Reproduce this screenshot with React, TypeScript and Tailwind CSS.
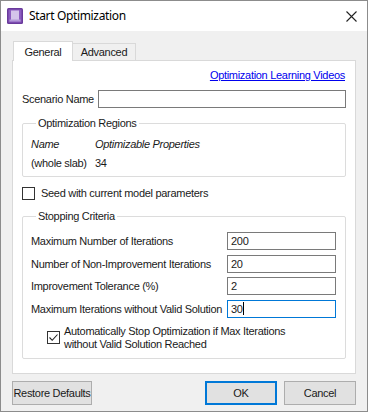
import React from "react";

const LABEL =
  "font-['Liberation_Sans',Arial,sans-serif] text-[11px] tracking-[-0.3px] leading-[14px] text-[#1a1a1a] whitespace-nowrap";

function Field({ value, focused, className }: { value: string; focused?: boolean; className: string }) {
  return (
    <div
      className={`h-[18px] bg-white border flex items-center pl-[3px] ${LABEL} ${
        focused ? "border-[#0078d7]" : "border-[#7a7a7a]"
      } ${className}`}
    >
      {value}
      {focused && <span className="w-px h-[13px] bg-black" />}
    </div>
  );
}

function Group({ title, className, children }: { title: string; className: string; children: React.ReactNode }) {
  return (
    <fieldset className={`border border-[#dcdcdc] rounded-[2px] ${className}`}>
      <legend className={`ml-[5px] px-[2px] ${LABEL}`}>{title}</legend>
      {children}
    </fieldset>
  );
}

const ROWS = [
  { label: "Maximum Number of Iterations", value: "200" },
  { label: "Number of Non-Improvement Iterations", value: "20" },
  { label: "Improvement Tolerance (%)", value: "2" },
  { label: "Maximum Iterations without Valid Solution", value: "30", focused: true },
];

export default function App() {
  return (
    <div className="w-[368px] h-[412px] border border-[#8c8c8c] bg-[#f0f0f0] flex flex-col overflow-hidden">
      {/* title bar */}
      <div className="h-[30px] bg-white flex items-center pl-[6px] pr-[10px] shrink-0">
        <svg width="16" height="16" viewBox="0 0 16 16">
          <rect x="0" y="0" width="16" height="16" rx="1.5" fill="#6a3a9c" />
          <rect x="1.5" y="1.5" width="13" height="13" fill="#8c5cc0" />
          <rect x="4" y="2.5" width="8" height="9.5" fill="#d4c4ea" />
          <rect x="2.5" y="11.5" width="11" height="2" fill="#b49ad8" />
        </svg>
        <span className="ml-[6px] font-['Noto_Sans',sans-serif] text-[12px] tracking-[-0.35px] text-black">
          Start Optimization
        </span>
        <svg className="ml-auto" width="11" height="11" viewBox="0 0 11 11">
          <path d="M0.5 0.5 L10.5 10.5 M10.5 0.5 L0.5 10.5" stroke="#222" strokeWidth="1.1" />
        </svg>
      </div>

      <div className="flex-1 flex flex-col px-[11px] pt-[10px]">
        {/* tabs */}
        <div className="flex items-end h-[19px] pl-px">
          <div className={`w-[60px] h-[20px] bg-white border border-b-0 border-[#d9d9d9] flex items-center justify-center -mb-px relative ${LABEL}`}>
            General
          </div>
          <div className={`w-[63px] h-[17px] border border-l-0 border-b-0 border-[#d9d9d9] flex items-center justify-center ${LABEL}`}>
            Advanced
          </div>
        </div>

        {/* panel */}
        <div className="w-[344px] h-[314px] bg-white border border-[#d9d9d9] flex flex-col px-[9px]">
          <div className="flex justify-end pr-[1px] pt-[7px] h-[24px]">
            <a className="font-['Liberation_Sans',Arial,sans-serif] text-[11px] tracking-[-0.3px] leading-[14px] text-[#0000ee] underline">
              Optimization Learning Videos
            </a>
          </div>

          <div className="flex items-center h-[18px] mt-[5px]">
            <span className={`w-[76px] ${LABEL}`}>Scenario Name</span>
            <div className="flex-1 h-[18px] border border-[#7a7a7a] bg-white" />
          </div>

          <Group title="Optimization Regions" className="mt-[8px] h-[61px] px-[8px]">
            <div className={`flex italic mt-[7px] ${LABEL}`}>
              <span className="w-[64px]">Name</span>
              <span>Optimizable Properties</span>
            </div>
            <div className={`flex mt-[5px] ${LABEL}`}>
              <span className="w-[64px]">(whole slab)</span>
              <span>34</span>
            </div>
          </Group>

          <label className="flex items-center mt-[9px] h-[14px]">
            <span className="w-[13px] h-[13px] border border-[#333] bg-white" />
            <span className={`ml-[6px] ${LABEL}`}>Seed with current model parameters</span>
          </label>

          <Group title="Stopping Criteria" className="mt-[9px] h-[150px] pl-[8px] pr-[9px]">
            <div className="flex flex-col gap-[4.5px] mt-[9px]">
              {ROWS.map((r) => (
                <div key={r.label} className="flex items-center h-[18px]">
                  <span className={`w-[196px] ${LABEL}`}>{r.label}</span>
                  <Field value={r.value} focused={r.focused} className="flex-1" />
                </div>
              ))}
            </div>
            <div className="flex items-center mt-[7px] pl-[16px]">
              <span className="w-[13px] h-[13px] border border-[#333] bg-white flex items-center justify-center">
                <svg width="11" height="11" viewBox="0 0 11 11">
                  <path d="M1.5 5.5 L4.2 8.3 L9.5 2.5" fill="none" stroke="#222" strokeWidth="1.1" />
                </svg>
              </span>
              <span className={`ml-[4px] !leading-[13px] ${LABEL}`}>
                Automatically Stop Optimization if Max Iterations
                <br />
                without Valid Solution Reached
              </span>
            </div>
          </Group>
        </div>

        {/* buttons */}
        <div className="flex items-center mt-[7px] h-[24px]">
          <button className={`w-[80px] h-[24px] bg-[#e1e1e1] border border-[#adadad] ${LABEL}`}>
            Restore Defaults
          </button>
          <button className={`ml-auto w-[72px] h-[24px] bg-[#e1e1e1] border-2 border-[#0078d7] ${LABEL}`}>
            OK
          </button>
          <button className={`ml-[7px] w-[72px] h-[24px] bg-[#e1e1e1] border border-[#adadad] ${LABEL}`}>
            Cancel
          </button>
        </div>
      </div>
    </div>
  );
}
